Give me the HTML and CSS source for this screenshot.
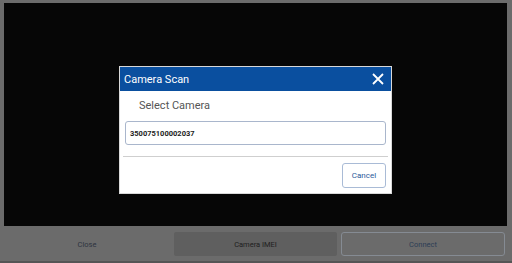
FILE: index.html
```html
<!DOCTYPE html>
<html>
<head>
<meta charset="utf-8">
<link rel="stylesheet" href="styles.css">
</head>
<body>
<div class="screen">
  <div class="stage">
    <div class="dialog">
      <div class="dlg-head">
        <span class="dlg-title">Camera Scan</span>
        <svg class="dlg-close" width="12" height="12" viewBox="0 0 12 12"><path d="M1 1L11 11M11 1L1 11" stroke="#fff" stroke-width="1.8" fill="none"/></svg>
      </div>
      <div class="dlg-body">
        <div class="dlg-label">Select Camera</div>
        <div class="dlg-input">350075100002037</div>
      </div>
      <div class="dlg-foot">
        <button class="btn-cancel">Cancel</button>
      </div>
    </div>
  </div>
  <div class="bar">
    <div class="bbtn plain">Close</div>
    <div class="bbtn filled">Camera IMEI</div>
    <div class="bbtn outline">Connect</div>
  </div>
</div>
</body>
</html>
```
FILE: styles.css
```css
html, body { margin: 0; padding: 0; }
body {
  width: 512px; height: 263px; overflow: hidden;
  background: #6b6b6b;
  font-family: Roboto, "Liberation Sans", sans-serif;
}
.screen {
  display: flex; flex-direction: column;
  height: 263px; box-sizing: border-box;
  padding: 3px 5px 0 4px;
  border-bottom: 2px solid #555;
}
.stage {
  flex: 0 0 223px;
  background: #060606;
  display: flex; justify-content: center; align-items: flex-start;
  padding-top: 63px; box-sizing: border-box;
}
.dialog {
  width: 273px;
  background: #fff;
  border: 1px solid #d8d8d8;
  box-sizing: border-box;
}
.dlg-head {
  height: 24px; background: #0a4f9f;
  display: flex; align-items: center; justify-content: space-between;
  padding: 0 7px 0 4px;
}
.dlg-title { color: #fff; font-size: 11px; }
.dlg-close { display: block; }
.dlg-body { padding: 8px 2px 11px; border-bottom: 1px solid #cfcfcf; margin: 0 3px; }
.dlg-label { color: #555; font-size: 11px; padding-left: 14px; height: 14px; line-height: 14px; margin-bottom: 8px; }
.dlg-input {
  height: 24px; box-sizing: border-box;
  border: 1px solid #a9b6cc; border-radius: 3px;
  font-size: 7.5px; font-weight: bold; color: #222;
  display: flex; align-items: center; padding-left: 4px;
}
.dlg-foot { display: flex; justify-content: flex-end; padding: 6px 5px 5px; }
.btn-cancel {
  width: 44px; height: 25px;
  background: #fff; border: 1px solid #a9bbd6; border-radius: 3px;
  color: #2a5a9a; font-size: 8px; font-family: inherit; padding: 0;
}
.bar {
  flex: 1;
  display: grid; grid-template-columns: 166px 163px 164px; column-gap: 4px;
  padding: 6px 0 0 0;
  align-items: start;
}
.bbtn {
  height: 24px; box-sizing: border-box;
  display: flex; align-items: center; justify-content: center;
  font-size: 7.5px;
}
.plain { color: #2e3440; }
.filled { background: #5f5f5f; color: #1e1e1e; border-radius: 2px; }
.outline { border: 1px solid #858b93; border-radius: 3px; color: #2c3d55; }
```
